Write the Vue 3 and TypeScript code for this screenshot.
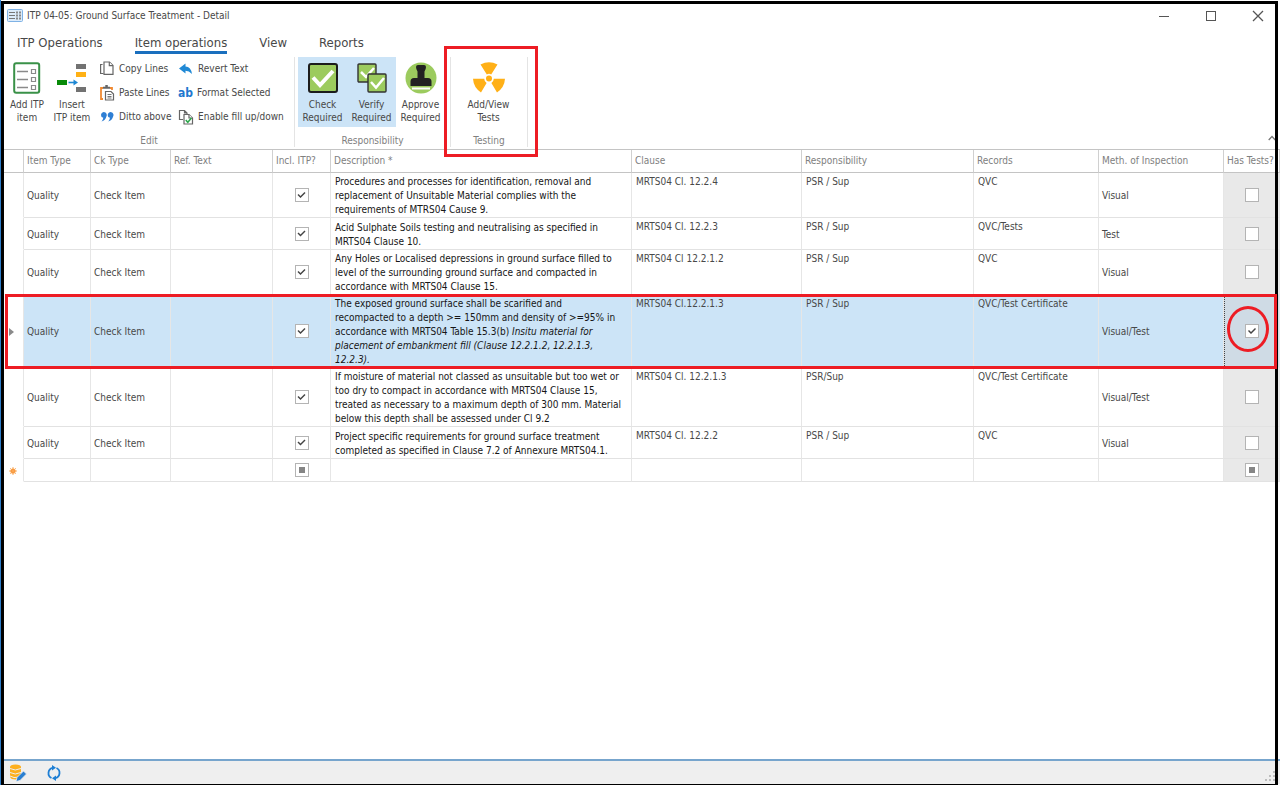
<script setup lang="ts">
import { ref } from 'vue'

interface Row {
  lines: string[]
  italic?: string[]
  clause: string
  resp: string
  records: string
  method: string
  tests: boolean
  selected?: boolean
}

const tabs = ['ITP Operations', 'Item operations', 'View', 'Reports']
const activeTab = ref('Item operations')

const rows: Row[] = [
  {
    lines: [
      'Procedures and processes for identification, removal and',
      'replacement of Unsuitable Material complies with the',
      'requirements of MTRS04 Cause 9.',
    ],
    clause: 'MRTS04 Cl. 12.2.4', resp: 'PSR / Sup', records: 'QVC', method: 'Visual', tests: false,
  },
  {
    lines: ['Acid Sulphate Soils testing and neutralising as specified in', 'MRTS04 Clause 10.'],
    clause: 'MRTS04 Cl. 12.2.3', resp: 'PSR / Sup', records: 'QVC/Tests', method: 'Test', tests: false,
  },
  {
    lines: [
      'Any Holes or Localised depressions in ground surface filled to',
      'level of the surrounding ground surface and compacted in',
      'accordance with MRTS04 Clause 15.',
    ],
    clause: 'MRTS04 Cl 12.2.1.2', resp: 'PSR / Sup', records: 'QVC', method: 'Visual', tests: false,
  },
  {
    lines: [
      'The exposed ground surface shall be scarified and',
      'recompacted to a depth >= 150mm and density of >=95% in',
      'accordance with MRTS04 Table 15.3(b) ',
    ],
    italic: ['Insitu material for', 'placement of embankment fill (Clause 12.2.1.2, 12.2.1.3,', '12.2.3).'],
    clause: 'MRTS04 Cl.12.2.1.3', resp: 'PSR / Sup', records: 'QVC/Test Certificate', method: 'Visual/Test',
    tests: true, selected: true,
  },
  {
    lines: [
      'If moisture of material not classed as unsuitable but too wet or',
      'too dry to compact in accordance with MRTS04 Clause 15,',
      'treated as necessary to a maximum depth of 300 mm. Material',
      'below this depth shall be assessed under Cl 9.2',
    ],
    clause: 'MRTS04 Cl. 12.2.1.3', resp: 'PSR/Sup', records: 'QVC/Test Certificate', method: 'Visual/Test', tests: false,
  },
  {
    lines: ['Project specific requirements for ground surface treatment', 'completed as specified in Clause 7.2 of Annexure MRTS04.1.'],
    clause: 'MRTS04 Cl. 12.2.2', resp: 'PSR / Sup', records: 'QVC', method: 'Visual', tests: false,
  },
]
</script>

<template>
  <div class="window">
    <header class="titlebar">
      <svg class="app-icon" width="16" height="14" viewBox="0 0 16 14">
        <rect x="0.5" y="0.5" width="15" height="12" rx="1" fill="#dcebfa" stroke="#7fb2e5" />
        <path d="M2 3.5h6M2 6.5h6M2 9.5h6" stroke="#777" />
        <path d="M9 2.5h2v2H9zM9 5.5h2v2H9zM9 8.5h2v2H9zM12 2.5h2v2h-2zM12 5.5h2v2h-2zM12 8.5h2v2h-2z" fill="#888" />
      </svg>
      <h1>ITP 04-05: Ground Surface Treatment - Detail</h1>
      <div class="win-buttons">
        <button type="button" aria-label="Minimize"><svg width="12" height="12" viewBox="0 0 12 12"><path d="M1 6.5h10" stroke="#555" /></svg></button>
        <button type="button" aria-label="Maximize"><svg width="12" height="12" viewBox="0 0 12 12"><rect x="1.5" y="1.5" width="9" height="9" fill="none" stroke="#555" /></svg></button>
        <button type="button" aria-label="Close"><svg width="12" height="12" viewBox="0 0 12 12"><path d="M1 1l10 10M11 1L1 11" stroke="#555" stroke-width="1.3" /></svg></button>
      </div>
    </header>

    <nav class="tabs">
      <button v-for="t in tabs" :key="t" type="button" :class="{ active: t === activeTab }" @click="activeTab = t">{{ t }}</button>
    </nav>

    <div class="ribbon">
      <section class="group edit">
        <div class="tools">
          <button type="button" class="big add">
            <svg width="32" height="32" viewBox="0 0 32 32">
              <rect x="3.2" y="1.2" width="25" height="29.6" rx="2" fill="#fff" stroke="#3a9148" stroke-width="2" />
              <path d="M6 9.5h11M6 17.5h11M6 25.5h11" stroke="#8a8a8a" stroke-width="1.4" />
              <path d="M20.5 7.500h4v4h-4zM20.500 15.500h4v4h-4zM20.500 23.500h4v4h-4z" fill="none" stroke="#8a8a8a" stroke-width="1.2" />
            </svg>
            <span>Add ITP<br />item</span>
          </button>
          <button type="button" class="big insert">
            <svg width="32" height="32" viewBox="0 0 32 32">
              <rect x="20" y="2" width="10" height="5" fill="#727272" />
              <rect x="20" y="10" width="10" height="5" fill="#ffb115" />
              <rect x="20" y="25" width="10" height="5" fill="#727272" />
              <rect x="1" y="18" width="10" height="5" fill="#088a08" />
              <path d="M12.500 20.500h7" stroke="#1e88d4" stroke-width="1.600" />
              <path d="M17.500 17.500l4.500 3-4.500 3z" fill="#1e88d4" />
            </svg>
            <span>Insert<br />ITP item</span>
          </button>
          <div class="small-tools">
            <button type="button">
              <svg width="16" height="16" viewBox="0 0 16 16" fill="#fff" stroke="#666" stroke-width="1.200"><path d="M4.500 12.500H1.600V3.500h2" /><path d="M5 1h5.500L14 4.500v8.900H5z" /><path d="M10.300 1v3.700H14" /></svg>
              Copy Lines
            </button>
            <button type="button">
              <svg width="16" height="16" viewBox="0 0 16 16" fill="none"><path d="M4 14H2V3h2M11 3h2v2" stroke="#f08a33" stroke-width="1.800" /><path d="M4 1.800h7v2H4zM6.300 0h2.500v2H6.300z" fill="#666" /><path d="M6.500 6.500h5.500l2.500 2.500v6h-8z" fill="#fff" stroke="#666" stroke-width="1.200" /><path d="M8.500 9.500h4M8.500 11.500h4M8.500 13h4" stroke="#777" /></svg>
              Paste Lines
            </button>
            <button type="button">
              <svg width="16" height="16" viewBox="0 0 16 16" fill="#2f7fd4"><path d="M2 6a2.900 2.900 0 1 1 5.400 1.500Q6.500 11.500 2.500 12.500q1.500-1.500 1.800-3.700A2.700 2.700 0 0 1 2 6z" /><path d="M8.700 6a2.900 2.900 0 1 1 5.400 1.500Q13.200 11.500 9.200 12.500q1.500-1.500 1.800-3.700A2.700 2.700 0 0 1 8.700 6z" /></svg>
              Ditto above
            </button>
          </div>
          <div class="small-tools second">
            <button type="button">
              <svg width="16" height="16" viewBox="0 0 16 16"><path d="M1 7.500L7.500 2.500v3q5.500.2 6.500 7.500Q11 9.800 7.500 9.800V12.500z" fill="#2089d5" /></svg>
              Revert Text
            </button>
            <button type="button">
              <b class="ab" aria-hidden="true">ab</b>
              Format Selected
            </button>
            <button type="button">
              <svg width="16" height="16" viewBox="0 0 16 16" fill="#fff" stroke="#666" stroke-width="1.200"><path d="M5 10.500H1.500V1.500h5L9 4v1M6.500 1.500V4H9" /><path d="M6 5.500h5l3.500 3.500v6H6z" /><path d="M11 5.500V9h3.500" /><path d="M7.800 11l2 2.300 3.600-4.300" fill="none" stroke="#2ba84a" stroke-width="1.500" /></svg>
              Enable fill up/down
            </button>
          </div>
        </div>
        <h2>Edit</h2>
      </section>

      <section class="group responsibility">
        <div class="tools">
          <button type="button" class="big on">
            <svg width="32" height="32" viewBox="0 0 32 32"><rect x="2" y="2" width="28" height="28" rx="2" fill="#9ccb5e" stroke="#1c1c1c" stroke-width="2" /><path d="M6 15.500l7 7.500L26 9" fill="none" stroke="#fff" stroke-width="4" /></svg>
            <span>Check<br />Required</span>
          </button>
          <button type="button" class="big on">
            <svg width="32" height="32" viewBox="0 0 32 32"><rect x="2" y="2" width="18" height="18" rx="1" fill="#9ccb5e" stroke="#333" stroke-width="1.400" /><path d="M5 10l5 5 8-9" fill="none" stroke="#fff" stroke-width="2.500" /><rect x="12" y="12" width="18" height="18" rx="1" fill="#9ccb5e" stroke="#333" stroke-width="1.400" /><path d="M15 20l5 5.500 8-9.500" fill="none" stroke="#fff" stroke-width="2.500" /></svg>
            <span>Verify<br />Required</span>
          </button>
          <button type="button" class="big">
            <svg width="32" height="32" viewBox="0 0 32 32"><circle cx="16" cy="16" r="15.500" fill="#9ccb5e" /><path d="M11 5q0-2 2-2h6q2 0 2 2 0 2-1.500 4.500V16H23q3.500 0 3.500 3.500V24h-21v-4.500Q5.500 16 9 16h3.500V9.500Q11 7 11 5z" fill="#222" /><path d="M7 26.500h18" stroke="#fff" stroke-width="2" /></svg>
            <span>Approve<br />Required</span>
          </button>
        </div>
        <h2>Responsibility</h2>
      </section>

      <section class="group testing">
        <div class="tools">
          <button type="button" class="big">
            <svg width="32" height="32" viewBox="0 0 32 32" fill="#ffb017"><circle cx="16" cy="16.500" r="3" /><path d="M13.800 12.400L7.500 2.500Q16-1.800 24.500 2.500L18.200 12.400Q16 11.200 13.800 12.400z" /><path d="M11.200 16.800H0Q.5 25.500 8 30.500L13.600 21Q11.300 19.500 11.200 16.800z" /><path d="M20.800 16.800H32Q31.500 25.500 24 30.500L18.400 21Q20.700 19.500 20.800 16.800z" /></svg>
            <span>Add/View<br />Tests</span>
          </button>
        </div>
        <h2>Testing</h2>
        <span class="marker"></span>
      </section>
      <button type="button" class="collapse" aria-label="Collapse ribbon"><svg width="8" height="6" viewBox="0 0 8 6"><path d="M.7 5L4 1.500 7.300 5" fill="none" stroke="#777" stroke-width="1.300" /></svg></button>
    </div>

    <main>
      <table>
        <colgroup>
          <col class="c-ind" /><col class="c-type" /><col class="c-ck" /><col class="c-ref" /><col class="c-incl" /><col />
          <col class="c-clause" /><col class="c-resp" /><col class="c-rec" /><col class="c-meth" /><col class="c-tests" />
        </colgroup>
        <thead>
          <tr>
            <th></th><th>Item Type</th><th>Ck Type</th><th>Ref. Text</th><th>Incl. ITP?</th><th>Description *</th>
            <th>Clause</th><th>Responsibility</th><th>Records</th><th>Meth. of Inspection</th><th>Has Tests?</th>
          </tr>
        </thead>
        <tbody>
          <tr v-for="(r, i) in rows" :key="i" :class="{ selected: r.selected }">
            <td class="indicator">
              <svg v-if="r.selected" width="5" height="8" viewBox="0 0 5 8"><path d="M0 0l5 4-5 4z" fill="#8a8a8a" /></svg>
              <span v-if="r.selected" class="row-marker"></span>
            </td>
            <td>Quality</td>
            <td>Check Item</td>
            <td></td>
            <td class="tick"><input type="checkbox" checked :aria-label="`Include in ITP, row ${i + 1}`" /></td>
            <td class="desc"><template v-for="(l, n) in r.lines" :key="n"><br v-if="n" />{{ l }}</template><em v-if="r.italic"><template v-for="(l, n) in r.italic" :key="n"><br v-if="n" />{{ l }}</template></em></td>
            <td class="top">{{ r.clause }}</td>
            <td class="top">{{ r.resp }}</td>
            <td class="top">{{ r.records }}</td>
            <td>{{ r.method }}</td>
            <td class="tick tests">
              <input type="checkbox" :checked="r.tests" :aria-label="`Has tests, row ${i + 1}`" />
              <span v-if="r.selected" class="ring"></span>
            </td>
          </tr>
          <tr class="new">
            <td class="indicator"><svg width="8" height="8" viewBox="0 0 8 8"><circle cx="4" cy="4" r="2.600" fill="#f7902f" /><path d="M4 0v8M0 4h8M1.200 1.200l5.600 5.600M6.800 1.200L1.200 6.800" stroke="#f9a654" stroke-width=".9" /></svg></td>
            <td></td><td></td><td></td>
            <td class="tick"><input type="checkbox" :indeterminate="true" aria-label="Include in ITP, new row" /></td>
            <td></td><td></td><td></td><td></td><td></td>
            <td class="tick tests"><input type="checkbox" :indeterminate="true" aria-label="Has tests, new row" /></td>
          </tr>
        </tbody>
      </table>
    </main>

    <footer>
      <button type="button" aria-label="Edit data">
        <svg width="18" height="18" viewBox="0 0 18 18"><path d="M1 3q0-2.500 5.500-2.500T12 3v10q-1 2.500-5.500 2.500T1 13z" fill="#fdb01f" /><path d="M1 4.500q5 3 11 0M1 8.500q5 3 11 0M1 12q4 2.500 8 1.200" fill="none" stroke="#efefef" /><path d="M7 17.500l1-4 6.500-6.500 3 3-6.500 6.500z" fill="#2b7fd0" stroke="#efefef" stroke-width=".8" /></svg>
      </button>
      <button type="button" aria-label="Refresh">
        <svg width="16" height="16" viewBox="0 0 16 16" fill="none" stroke="#1f7fd4" stroke-width="1.800"><path d="M5.500 13A5.500 5.500 0 0 1 6.500 2.800M10.500 3A5.500 5.500 0 0 1 9.500 13.200" /><path d="M6 0l4 2.800L6 5.600zM10 10.400L6 13.200l4 2.800z" fill="#1f7fd4" stroke="none" /></svg>
      </button>
      <svg class="grip" width="12" height="11" viewBox="0 0 12 11" fill="#bdbdbd"><path d="M8 0h2v2H8zM4 4h2v2H4zM8 4h2v2H8zM0 8h2v2H0zM4 8h2v2H4zM8 8h2v2H8z" /></svg>
    </footer>
  </div>
</template>

<style>
html,
body {
  margin: 0;
  background: #fff;
}
</style>

<style scoped>
* {
  box-sizing: border-box;
}
.window {
  position: relative;
  display: flex;
  flex-direction: column;
  min-height: 100vh;
  padding: 4px 0 1px 4px;
  overflow: hidden;
  background: #fff;
  color: #484848;
  font: 10px/14px 'DejaVu Sans Condensed', 'Noto Sans', sans-serif;
}
.window::before {
  content: '';
  position: absolute;
  inset: 0 auto 0 0;
  width: 1px;
  background: #2c7cc9;
}
.window::after {
  content: '';
  position: absolute;
  inset: 1px 2px 0 1px;
  border: 3px solid #000;
  border-bottom-width: 1px;
  pointer-events: none;
}
button {
  padding: 0;
  border: 0;
  background: none;
  color: inherit;
  font: inherit;
  white-space: nowrap;
}
svg {
  display: block;
  flex: none;
}
h1,
h2 {
  margin: 0;
  font: inherit;
}
.titlebar {
  display: flex;
  align-items: center;
  height: 24px;
  padding-left: 3px;
}
.titlebar h1 {
  margin-left: 4px;
}
.win-buttons {
  display: flex;
  gap: 35px;
  margin-left: auto;
  padding-right: 16px;
}
.tabs {
  display: flex;
  gap: 32px;
  height: 29px;
  padding: 6px 0 0 13px;
}
.tabs button {
  height: 20px;
  font-size: 13px;
  line-height: 17px;
  border-bottom: 3px solid transparent;
}
.tabs .active {
  border-color: #1a6fbe;
}
.ribbon {
  position: relative;
  display: flex;
  height: 93px;
  border-bottom: 1px solid #c4c4c4;
}
.group {
  position: relative;
  height: 90px;
  border-right: 1px solid #e4e4e4;
}
.group h2 {
  margin-top: 7px;
  text-align: center;
  color: #808080;
}
.tools {
  display: flex;
  height: 70px;
}
.big {
  display: flex;
  flex-direction: column;
  align-items: center;
  padding-top: 5px;
  line-height: 13px;
}
.big span {
  margin-top: 4px;
}
.on {
  background: #cce4f7;
}
.edit {
  width: 291px;
}
.add {
  width: 46px;
}
.insert {
  width: 44px;
}
.small-tools {
  display: flex;
  flex-direction: column;
  width: 79px;
  margin-left: 5px;
}
.small-tools.second {
  margin-left: 0;
}
.small-tools button {
  display: flex;
  flex: none;
  align-items: center;
  gap: 4px;
  height: 24px;
}
.ab {
  width: 16px;
  color: #1f78cf;
  font-size: 12px;
}
.responsibility {
  width: 156px;
  padding: 0 3px;
}
.responsibility .big {
  width: 49px;
}
.testing {
  width: 77px;
}
.testing .big {
  width: 75px;
}
.marker {
  position: absolute;
  inset: -11px -11px -10px -7px;
  border: 3px solid #ed1c24;
  z-index: 1;
}
.collapse {
  position: absolute;
  right: 4px;
  bottom: 8px;
}
main {
  flex: 1;
}
table {
  width: 100%;
  table-layout: fixed;
  border-collapse: separate;
  border-spacing: 0;
}
.c-ind { width: 20px; }
.c-type { width: 67px; }
.c-ck { width: 80px; }
.c-ref { width: 102px; }
.c-incl { width: 58px; }
.c-clause { width: 170px; }
.c-resp { width: 172px; }
.c-rec { width: 125px; }
.c-meth { width: 125px; }
.c-tests { width: 56px; }
th {
  height: 23px;
  padding: 0 0 0 3px;
  border-right: 1px solid #d0d0d0;
  border-bottom: 1px solid #c4c4c4;
  color: #808080;
  font-weight: 400;
  text-align: left;
  white-space: nowrap;
}
td {
  height: 32px;
  padding: 2px 0 0 3px;
  border-right: 1px solid #e6e6e6;
  border-bottom: 1px solid #e2e2e2;
  white-space: nowrap;
}
.new td {
  height: 23px;
}
td.indicator {
  padding-left: 5px;
  border-bottom-color: transparent;
}
td.top {
  padding-left: 4px;
  vertical-align: top;
}
td.desc {
  padding-left: 4px;
  color: #161616;
}
td.tick {
  padding: 0;
}
td.tests {
  position: relative;
  background: #e9e9e9;
}
.selected {
  position: relative;
}
.selected td {
  background: #cce4f7;
}
.selected td.indicator {
  background: #fff;
}
.selected td.tests {
  background: #cfdbe5;
  border-left: 1px dotted #444;
}
.row-marker {
  position: absolute;
  inset: -1px 3px -1px 1px;
  border: 3px solid #ed1c24;
  z-index: 2;
}
.ring {
  position: absolute;
  top: 50%;
  left: 2px;
  width: 42px;
  height: 46px;
  margin-top: -25px;
  border: 3px solid #ed1c24;
  border-radius: 50%;
  pointer-events: none;
}
input {
  display: block;
  appearance: none;
  width: 14px;
  height: 14px;
  margin: 0 auto;
  border: 1px solid #b4b4b4;
  background: #fff;
}
input:checked::before {
  content: '';
  display: block;
  width: 12px;
  height: 12px;
  background: #444;
  clip-path: polygon(2px 6px, 3px 5px, 5px 7px, 9px 3px, 10px 4px, 5px 9px);
}
input:indeterminate::before {
  content: '';
  display: block;
  width: 6px;
  height: 6px;
  margin: 3px;
  background: #858585;
}
footer {
  display: flex;
  align-items: center;
  gap: 19px;
  height: 25px;
  padding: 0 3px 0 5px;
  border-top: 2px solid #77a5cd;
  background: #efefef;
}
.grip {
  margin: 7px 0 0 auto;
}
</style>
